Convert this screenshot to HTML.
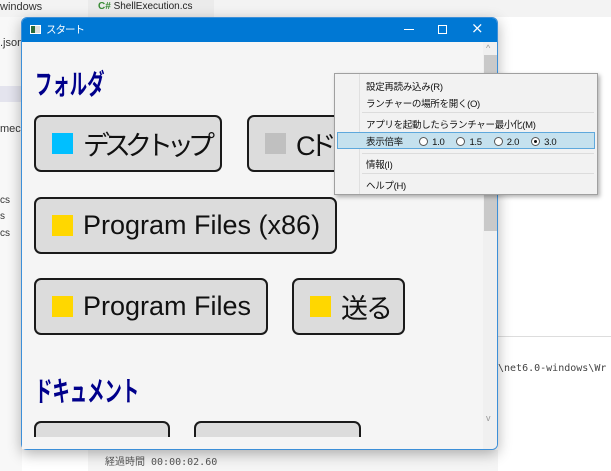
<!DOCTYPE html>
<html><head><meta charset="utf-8"><style>
*{margin:0;padding:0;box-sizing:border-box}
body{width:611px;height:471px;overflow:hidden;background:#fff;font-family:"Liberation Sans","Noto Sans CJK JP",sans-serif;position:relative}
.a{position:absolute}
.side{font-size:11px;color:#333}
.btn{position:absolute;background:#dcdcdc;border:2px solid #1a1a1a;border-radius:7px;font-size:27px;color:#111;display:flex;align-items:center;padding-left:16px;white-space:nowrap;overflow:hidden}
.sq{width:21px;height:21px;margin-right:10px;flex:none}
.jp{letter-spacing:-6px}
.h{position:absolute;color:#00008b;font-weight:bold;font-size:28px;left:35px;transform:scaleX(0.62);transform-origin:left top;white-space:nowrap}
.mi{position:absolute;left:366px;font-size:9.5px;color:#111;letter-spacing:-0.3px}
.sep{position:absolute;left:362px;width:232px;height:1px;background:#dcdcdc}
.rb{display:inline-block;width:9px;height:9px;border:1px solid #555;border-radius:50%;vertical-align:-1px;margin:0 4px 0 12px;background:#fff;position:relative}
</style></head><body>
<div class="a" style="left:0;top:0;width:611px;height:17px;background:#f3f3f3"></div>
<div class="a" style="left:88px;top:0;width:126px;height:17px;background:#ebebeb"></div>
<div class="a" style="left:98px;top:1px;font-size:10px;color:#222"><b style="color:#388a34">C#</b> ShellExecution.cs</div>
<div class="a" style="left:0;top:17px;width:22px;height:454px;background:#f8f8f8"></div>
<div class="a" style="left:0;top:86px;width:22px;height:16px;background:#e4e4ee"></div>
<div class="a side" style="left:0;top:1px">windows</div>
<div class="a side" style="left:0;top:37px">.json</div>
<div class="a side" style="left:0;top:123px">meco</div>
<div class="a side" style="left:0;top:195px;font-size:10px">cs</div>
<div class="a side" style="left:0;top:211px;font-size:10px">s</div>
<div class="a side" style="left:0;top:228px;font-size:10px">cs</div>
<div class="a" style="left:498px;top:336px;width:113px;height:1px;background:#ddd"></div>
<div class="a" style="left:498px;top:363px;font-family:'DejaVu Sans Mono',monospace;font-size:10px;color:#444">\net6.0-windows\Wr</div>
<div class="a" style="left:88px;top:450px;width:410px;height:21px;background:#f5f5f5"></div>
<div class="a" style="left:105px;top:453px;font-family:'DejaVu Sans Mono','Noto Sans CJK JP',monospace;font-size:10px;color:#555">経過時間 00:00:02.60</div>

<div class="a" style="left:21px;top:17px;width:477px;height:433px;background:#f5f5f5;border:1px solid #3c8fd8;border-radius:6px;overflow:hidden;box-shadow:0 4px 14px rgba(0,0,0,.3)">
 <div class="a" style="left:0;top:0;width:477px;height:24px;background:#0078d4"></div>
 <div class="a" style="left:8px;top:7px;width:11px;height:9px;background:#ddd;border:1px solid #fff"><div style="width:4px;height:7px;background:#2a6b3a"></div></div>
 <div class="a" style="left:24px;top:4px;color:#fff;font-size:10.5px;letter-spacing:-1px">スタート</div>
 <div class="a" style="left:382px;top:11px;width:10px;height:1px;background:#fff"></div>
 <div class="a" style="left:416px;top:7px;width:9px;height:9px;border:1px solid #fff"></div>
 <div class="a" style="left:449px;top:1px;color:#fff;font-size:15px;font-family:'DejaVu Sans',sans-serif">×</div>
 <div class="a" style="left:461px;top:24px;width:15px;height:408px;background:#f0f0f0"></div>
 <div class="a" style="left:462px;top:37px;width:13px;height:176px;background:#c9c9c9"></div>
 <div class="a" style="left:464px;top:25px;font-size:9px;color:#999">^</div>
 <div class="a" style="left:464px;top:395px;font-size:9px;color:#999">v</div>
</div>
<div class="a" style="left:22px;top:437px;width:461px;height:12px;background:#f5f5f5"></div>

<div class="h" style="top:63px">フォルダ</div>
<div class="btn" style="left:34px;top:115px;width:188px;height:57px"><div class="sq" style="background:#00bfff"></div><span class="jp">デスクトップ</span></div>
<div class="btn" style="left:247px;top:115px;width:140px;height:57px"><div class="sq" style="background:#c0c0c0"></div><span class="jp">Cドライブ</span></div>
<div class="btn" style="left:34px;top:197px;width:303px;height:57px"><div class="sq" style="background:#ffd700"></div>Program Files (x86)</div>
<div class="btn" style="left:34px;top:278px;width:234px;height:57px"><div class="sq" style="background:#ffd700"></div>Program Files</div>
<div class="btn" style="left:292px;top:278px;width:113px;height:57px"><div class="sq" style="background:#ffd700"></div><span style="letter-spacing:-2px">送る</span></div>
<div class="h" style="top:370px">ドキュメント</div>
<div class="a" style="left:34px;top:421px;width:136px;height:16px;background:#dcdcdc;border:2px solid #1a1a1a;border-bottom:none;border-radius:7px 7px 0 0"></div>
<div class="a" style="left:194px;top:421px;width:167px;height:16px;background:#dcdcdc;border:2px solid #1a1a1a;border-bottom:none;border-radius:7px 7px 0 0"></div>

<div class="a" style="left:334px;top:73px;width:264px;height:122px;background:#f2f2f2;border:1px solid #a0a0a0;box-shadow:2px 2px 4px rgba(0,0,0,.3)"></div>
<div class="a" style="left:359px;top:74px;width:1px;height:120px;background:#e0e0e0"></div>
<div class="mi" style="top:79px">設定再読み込み(R)</div>
<div class="mi" style="top:96px">ランチャーの場所を開く(O)</div>
<div class="sep" style="top:112px"></div>
<div class="mi" style="top:117px">アプリを起動したらランチャー最小化(M)</div>
<div class="a" style="left:337px;top:132px;width:258px;height:17px;background:#c5e1ee;border:1px solid #5ea8dc"></div>
<div class="mi" style="top:134px">表示倍率 <span class="rb" style="margin-left:14px"></span>1.0<span class="rb"></span>1.5<span class="rb"></span>2.0<span class="rb"><span style="position:absolute;left:2px;top:2px;width:3px;height:3px;background:#111;border-radius:50%"></span></span>3.0</div>
<div class="sep" style="top:153px"></div>
<div class="mi" style="top:157px">情報(I)</div>
<div class="sep" style="top:173px"></div>
<div class="mi" style="top:178px">ヘルプ(H)</div>
</body></html>
